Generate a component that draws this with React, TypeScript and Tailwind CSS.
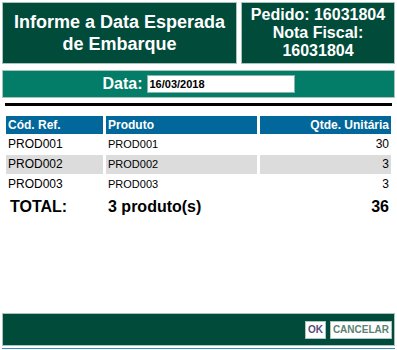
const rows = [
  { code: 'PROD001', name: 'PROD001', qty: 30 },
  { code: 'PROD002', name: 'PROD002', qty: 3 },
  { code: 'PROD003', name: 'PROD003', qty: 3 },
];

export default function App() {
  const total = rows.reduce((sum, r) => sum + r.qty, 0);

  return (
    <div className="h-[350px] w-[397px] bg-white font-['Liberation_Sans',Arial,sans-serif] flex flex-col">
      {/* cabeçalho */}
      <div className="flex gap-[4px] px-[2px] pt-[2px]">
        <div className="flex h-[62px] w-[235px] items-center justify-center border border-[#a9c4bd] bg-[#004b3a] text-center text-[18px] font-bold leading-[22px] text-white">
          Informe a Data Esperada
          <br />
          de Embarque
        </div>
        <div className="flex h-[62px] flex-1 items-center justify-center border border-[#a9c4bd] bg-[#004b3a] text-center text-[16px] font-bold leading-[18px] text-white">
          Pedido: 16031804
          <br />
          Nota Fiscal:
          <br />
          16031804
        </div>
      </div>

      <div className="mx-[2px] mt-[6px] flex h-[28px] items-center justify-center gap-[4px] border border-[#a9c4bd] bg-[#037d67]">
        <span className="text-[16px] font-bold text-white">Data:</span>
        <input
          defaultValue="16/03/2018"
          className="h-[18px] w-[148px] border border-[#8fb3aa] bg-white px-[2px] text-[11px] font-bold text-black outline-none"
        />
      </div>

      <div className="mx-[5px] mt-[5px] h-[3px] bg-black" />

      <div className="mt-[10px] px-[6px]">
        <div className="grid grid-cols-[97px_151px_1fr] gap-x-[3px] gap-y-[1px] text-[12px]">
          <div className="h-[18px] bg-[#02679a] px-[2px] font-bold leading-[18px] text-white">Cód. Ref.</div>
          <div className="h-[18px] bg-[#02679a] px-[2px] font-bold leading-[18px] text-white">Produto</div>
          <div className="h-[18px] bg-[#02679a] px-[2px] text-right font-bold leading-[18px] text-white">Qtde. Unitária</div>
          {rows.map((r, i) => {
            const bg = i % 2 === 1 ? 'bg-[#dcdcdc]' : 'bg-white';
            return [
              <div key={r.code + 'a'} className={`h-[19px] px-[2px] leading-[19px] text-[12px] text-black ${bg}`}>{r.code}</div>,
              <div key={r.code + 'b'} className={`h-[19px] px-[2px] leading-[19px] text-[11px] text-black ${bg}`}>{r.name}</div>,
              <div key={r.code + 'c'} className={`h-[19px] px-[2px] text-right leading-[19px] text-[12px] text-black ${bg}`}>{r.qty}</div>,
            ];
          })}
          <div className="h-[24px] px-[4px] text-[16px] font-bold leading-[24px] text-black">TOTAL:</div>
          <div className="h-[24px] px-[2px] text-[16px] font-bold leading-[24px] text-black">{rows.length} produto(s)</div>
          <div className="h-[24px] px-[2px] text-right text-[16px] font-bold leading-[24px] text-black">{total}</div>
        </div>
      </div>

      {/* rodapé */}
      <div className="mx-[2px] mt-auto flex h-[33px] items-center justify-end gap-[4px] border border-[#a9c4bd] bg-[#004b3a] pr-[2px]">
        <button className="h-[18px] border border-[#b0c4c0] bg-white px-[2px] text-[10px] font-bold leading-[16px] text-[#5a4a7a]">OK</button>
        <button className="h-[18px] border border-[#b0c4c0] bg-white px-[2px] text-[10px] font-bold leading-[16px] text-[#5c7f74]">CANCELAR</button>
      </div>
      <div className="mx-[2px] mb-[1px] mt-[2px] h-[1px] bg-[#3b8cc4]" />
    </div>
  );
}
